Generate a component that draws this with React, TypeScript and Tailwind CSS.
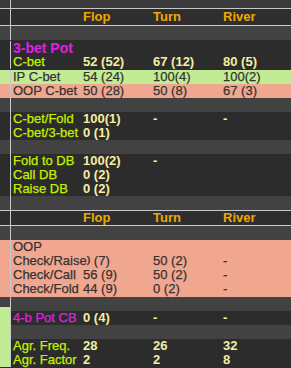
import type { ReactNode } from 'react'

type Tone = 'dark' | 'band' | 'green' | 'salmon' | 'head'

const rowBg: Record<Tone, string> = {
	dark: 'bg-[#2c2c2c]',
	band: 'bg-[#424242]',
	green: 'bg-[#c2ec94]',
	salmon: 'bg-[#f1a78f]',
	head: 'bg-[#2e2e2e]',
}

function Row({
	tone,
	strip,
	h = 'h-[14px]',
	children,
}: {
	tone: Tone
	strip?: ReactNode
	h?: string
	children?: ReactNode
}) {
	return (
		<div className={`flex ${h}`}>
			<div className={`w-[10px] shrink-0 flex flex-col ${strip ? '' : rowBg[tone]}`}>{strip}</div>
			<div className={`flex-1 flex items-center border-l border-[#c8c8c8] pl-[2px] ${rowBg[tone]}`}>
				{children}
			</div>
		</div>
	)
}

function Line() {
	return <div className="h-px bg-[#c8c8c8]" />
}

// one stat line: label plus flop / turn / river cells
function Stat({
	label,
	values = [],
	labelColor,
	valueColor,
	bold,
	labelBold,
}: {
	label: string
	values?: string[]
	labelColor: string
	valueColor: string
	bold?: boolean
	labelBold?: boolean
}) {
	return (
		<div className="flex w-full leading-[14px] whitespace-nowrap">
			<div className="w-[70px] shrink-0 overflow-visible">
				<span
					className={`relative z-10 ${labelColor} ${labelBold ? 'font-bold' : '[-webkit-text-stroke:0.25px]'}`}>
					{label}
				</span>
			</div>
			{[0, 1, 2].map((i) => (
				<div
					key={i}
					className={`w-[70px] shrink-0 ${valueColor} ${bold ? 'font-bold' : '[-webkit-text-stroke:0.25px]'}`}>
					{values[i] ?? ''}
				</div>
			))}
		</div>
	)
}

function Header() {
	return (
		<div className="flex w-full whitespace-nowrap font-bold text-[#f0a800]">
			<div className="w-[70px] shrink-0" />
			<div className="w-[70px]">Flop</div>
			<div className="w-[70px]">Turn</div>
			<div className="w-[70px]">River</div>
		</div>
	)
}

const lime = 'text-[#c2f000]'
const cream = 'text-[#f6eea0]'
const ink = 'text-[#333333]'
const pink = 'text-[#e020e0]'

export default function App() {
	return (
		<div
			className="w-[291px] h-[368px] overflow-hidden bg-[#2c2c2c] text-[13px]"
			style={{ fontFamily: '"Liberation Sans", Arial, sans-serif' }}>
			<div className="h-[8px] flex">
				<div className="w-[10px] bg-[#3a3a3a]" />
				<div className="flex-1 border-l border-[#c8c8c8] bg-[#3a3a3a]" />
			</div>
			<Line />
			<Row tone="head" h="h-[16px]">
				<Header />
			</Row>
			<Line />
			<Row tone="band" />

			<div className="py-[1px] bg-[#2c2c2c]">
				<Row tone="dark">
					<Stat label="3-bet Pot" labelColor={`${pink} text-[14px]`} valueColor={cream} labelBold />
				</Row>
				<Row tone="dark">
					<Stat label="C-bet" values={['52 (52)', '67 (12)', '80 (5)']} labelColor={lime} valueColor={cream} bold />
				</Row>
			</div>
			<Row tone="green">
				<Stat label="IP C-bet" values={['54 (24)', '100(4)', '100(2)']} labelColor={ink} valueColor={ink} />
			</Row>
			<Row tone="salmon">
				<Stat label="OOP C-bet" values={['50 (28)', '50 (8)', '67 (3)']} labelColor={ink} valueColor={ink} />
			</Row>
			<Row tone="band" />

			<Row tone="dark">
				<Stat label="C-bet/Fold" values={['100(1)', '-', '-']} labelColor={lime} valueColor={cream} bold />
			</Row>
			<Row tone="dark">
				<Stat label="C-bet/3-bet" values={['0 (1)']} labelColor={lime} valueColor={cream} bold />
			</Row>
			<Row tone="band" />

			<Row tone="dark">
				<Stat label="Fold to DB" values={['100(2)', '-']} labelColor={lime} valueColor={cream} bold />
			</Row>
			<Row tone="dark">
				<Stat label="Call DB" values={['0 (2)']} labelColor={lime} valueColor={cream} bold />
			</Row>
			<Row tone="dark">
				<Stat label="Raise DB" values={['0 (2)']} labelColor={lime} valueColor={cream} bold />
			</Row>
			<Row tone="band" />

			<Line />
			<Row tone="head">
				<Header />
			</Row>
			<Line />
			<Row tone="band" />

			<div className="bg-[#f1a78f] pb-[1px]">
				<Row tone="salmon">
					<Stat label="OOP" labelColor={ink} valueColor={ink} />
				</Row>
				<Row tone="salmon">
					{/* the long label is painted over the start of the flop cell */}
					<Stat label="Check/Raise" values={['0 (7)', '50 (2)', '-']} labelColor={`${ink} bg-[#f1a78f]`} valueColor={ink} />
				</Row>
				<Row tone="salmon">
					<Stat label="Check/Call" values={['56 (9)', '50 (2)', '-']} labelColor={ink} valueColor={ink} />
				</Row>
				<Row tone="salmon">
					<Stat label="Check/Fold" values={['44 (9)', '0 (2)', '-']} labelColor={ink} valueColor={ink} />
				</Row>
			</div>

			<Row
				tone="band"
				strip={
					<>
						<div className="h-[10px] bg-[#424242]" />
						<div className="flex-1 bg-[#c2ec94]" />
					</>
				}
			/>
			<Row tone="dark" strip={<div className="flex-1 bg-[#c2ec94]" />}>
				<Stat label="4-b Pot CB" values={['0 (4)', '-', '-']} labelColor={pink} valueColor={cream} bold />
			</Row>
			<Row tone="band" strip={<div className="flex-1 bg-[#c2ec94]" />} />
			<Row tone="dark" strip={<div className="flex-1 bg-[#c2ec94]" />}>
				<Stat label="Agr. Freq." values={['28', '26', '32']} labelColor={lime} valueColor={cream} bold />
			</Row>
			<Row tone="dark" strip={<div className="flex-1 bg-[#c2ec94]" />}>
				<Stat label="Agr. Factor" values={['2', '2', '8']} labelColor={lime} valueColor={cream} bold />
			</Row>
		</div>
	)
}
